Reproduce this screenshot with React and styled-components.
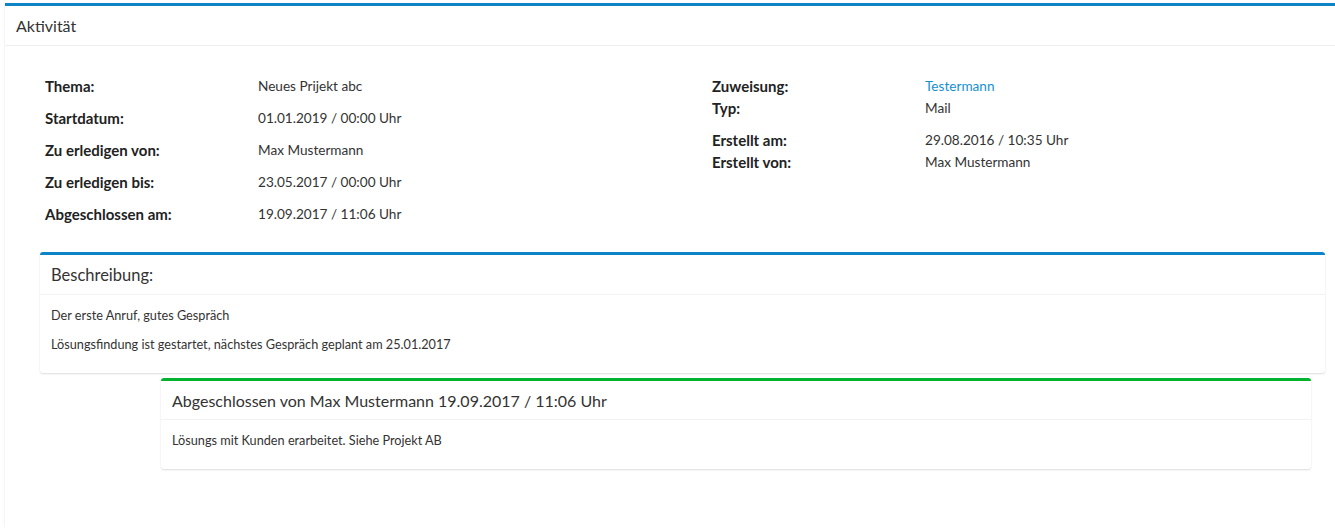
import styled, { createGlobalStyle } from 'styled-components';

const GlobalStyle = createGlobalStyle`
  html, body {
    margin: 0;
    padding: 0;
    background: #fff;
  }
  body {
    font-family: Lato, "Open Sans", "Noto Sans", sans-serif;
    color: #333;
  }
`;

const Page = styled.div`
  padding: 3px 0 0 5px;
`;

const Panel = styled.section`
  height: 524px;
  border-top: 3px solid #0d84c8;
  background: #fff;
  box-shadow: 0 1px 2px rgba(0, 0, 0, 0.12);
  box-sizing: border-box;
`;

const PanelHeader = styled.header`
  height: 39px;
  display: flex;
  align-items: center;
  padding: 0 11px;
  font-size: 16px;
  color: #333;
  border-bottom: 1px solid #f0f0f0;
`;

const PanelBody = styled.div`
  padding: 0 10px 0 35px;
`;

const DetailGrid = styled.div`
  display: grid;
  grid-template-columns: 667px 1fr;
  padding: 29px 0 27px 5px;
`;

const Column = styled.div`
  display: flex;
  flex-direction: column;
`;

const Group = styled.div`
  margin-bottom: ${(p) => p.$gap}px;
`;

const Row = styled.div`
  display: flex;
  align-items: center;
  height: 22px;
  line-height: 22px;
  margin-bottom: ${(p) => p.$gap || 0}px;
`;

const Label = styled.span`
  width: 213px;
  flex-shrink: 0;
  font-size: 15px;
  font-weight: 700;
  color: #222;
`;

const Value = styled.span`
  font-size: 13.6px;
  color: ${(p) => (p.$link ? '#1590d4' : '#333')};
`;

const Card = styled.div`
  margin: ${(p) => p.$margin};
  border-top: 3px solid ${(p) => p.$accent};
  border-radius: 3px;
  background: #fff;
  box-shadow: 0 1px 2px rgba(0, 0, 0, 0.14);
`;

const CardHeader = styled.div`
  height: ${(p) => p.$height}px;
  display: flex;
  align-items: center;
  padding: 0 11px;
  font-size: ${(p) => p.$size}px;
  color: #333;
  border-bottom: 1px solid #f2f2f2;
`;

const CardBody = styled.div`
  padding: ${(p) => p.$padding};
  font-size: 12.7px;
  color: #333;
`;

const Para = styled.p`
  margin: 0 0 11px;
  line-height: 18px;

  &:last-child {
    margin-bottom: 0;
  }
`;

const leftRows = [
  ['Thema:', 'Neues Prijekt abc'],
  ['Startdatum:', '01.01.2019 / 00:00 Uhr'],
  ['Zu erledigen von:', 'Max Mustermann'],
  ['Zu erledigen bis:', '23.05.2017 / 00:00 Uhr'],
  ['Abgeschlossen am:', '19.09.2017 / 11:06 Uhr'],
];

export default function App() {
  return (
    <Page>
      <GlobalStyle />
      <Panel>
        <PanelHeader>Aktivität</PanelHeader>
        <PanelBody>
          <DetailGrid>
            <Column>
              {leftRows.map(([l, v], i) => (
                <Row key={l} $gap={i < leftRows.length - 1 ? 10 : 0}>
                  <Label>{l}</Label>
                  <Value>{v}</Value>
                </Row>
              ))}
            </Column>
            <Column>
              <Group $gap={10}>
                <Row>
                  <Label>Zuweisung:</Label>
                  <Value $link>Testermann</Value>
                </Row>
                <Row>
                  <Label>Typ:</Label>
                  <Value>Mail</Value>
                </Row>
              </Group>
              <Group $gap={0}>
                <Row>
                  <Label>Erstellt am:</Label>
                  <Value>29.08.2016 / 10:35 Uhr</Value>
                </Row>
                <Row>
                  <Label>Erstellt von:</Label>
                  <Value>Max Mustermann</Value>
                </Row>
              </Group>
            </Column>
          </DetailGrid>

          <Card $accent="#0d84c8" $margin="0">
            <CardHeader $height={39} $size={16.5}>Beschreibung:</CardHeader>
            <CardBody $padding="11px 11px 20px">
              <Para>Der erste Anruf, gutes Gespräch</Para>
              <Para>Lösungsfindung ist gestartet, nächstes Gespräch geplant am 25.01.2017</Para>
            </CardBody>
          </Card>

          <Card $accent="#00b22d" $margin="5px 14px 0 121px">
            <CardHeader $height={38} $size={16}>
              Abgeschlossen von Max Mustermann 19.09.2017 / 11:06 Uhr
            </CardHeader>
            <CardBody $padding="11px 11px 20px">
              <Para>Lösungs mit Kunden erarbeitet. Siehe Projekt AB</Para>
            </CardBody>
          </Card>
        </PanelBody>
      </Panel>
    </Page>
  );
}
